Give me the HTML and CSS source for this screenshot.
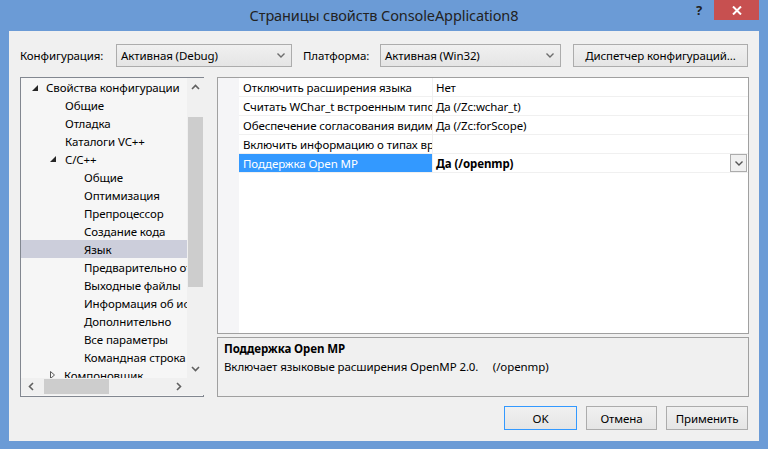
FILE: index.html
```html
<!DOCTYPE html>
<html lang="ru">
<head>
    <meta charset="UTF-8">
    <title>Страницы свойств ConsoleApplication8</title>
    <link rel="stylesheet" href="styles.css">
</head>
<body>

    <div class="titlebar">
        <span></span>
        <span class="title">Страницы свойств ConsoleApplication8</span>
        <div class="caption-buttons">
            <span class="help">?</span>
            <span class="close">
                <svg width="10" height="9" viewBox="0 0 10 9"><path d="M1 0.5 L9 8.5 M9 0.5 L1 8.5" stroke="#fff" stroke-width="2"/></svg>
            </span>
        </div>
    </div>

    <div class="dialog">
        <div class="config-row">
            <span class="label">Конфигурация:</span>
            <div class="combo combo-config">
                <span>Активная (Debug)</span>
                <svg class="chev" width="8" height="5" viewBox="0 0 8 5"><path d="M0.5 0.5 L4 4 L7.5 0.5" fill="none" stroke="#6d6d6d" stroke-width="1.4"/></svg>
            </div>
            <span class="label label-platform">Платформа:</span>
            <div class="combo combo-platform">
                <span>Активная (Win32)</span>
                <svg class="chev" width="8" height="5" viewBox="0 0 8 5"><path d="M0.5 0.5 L4 4 L7.5 0.5" fill="none" stroke="#6d6d6d" stroke-width="1.4"/></svg>
            </div>
            <button class="btn btn-manager">Диспетчер конфигураций...</button>
        </div>

        <div class="main">
            <div class="tree">
                <div class="tree-list">
                    <div class="node lvl0"><svg class="tri" width="6" height="6" viewBox="0 0 6 6"><polygon points="6,0 6,6 0,6" fill="#262626"/></svg>Свойства конфигурации</div>
                    <div class="node lvl1">Общие</div>
                    <div class="node lvl1">Отладка</div>
                    <div class="node lvl1">Каталоги VC++</div>
                    <div class="node lvl1 has-tri"><svg class="tri" width="6" height="6" viewBox="0 0 6 6"><polygon points="6,0 6,6 0,6" fill="#262626"/></svg>C/C++</div>
                    <div class="node lvl2">Общие</div>
                    <div class="node lvl2">Оптимизация</div>
                    <div class="node lvl2">Препроцессор</div>
                    <div class="node lvl2">Создание кода</div>
                    <div class="node lvl2 selected">Язык</div>
                    <div class="node lvl2">Предварительно откомпилированные заголовки</div>
                    <div class="node lvl2">Выходные файлы</div>
                    <div class="node lvl2">Информация об исходных файлах</div>
                    <div class="node lvl2">Дополнительно</div>
                    <div class="node lvl2">Все параметры</div>
                    <div class="node lvl2">Командная строка</div>
                    <div class="node lvl1 has-tri"><svg class="tri" width="5" height="8" viewBox="0 0 5 8"><polygon points="0.5,0.5 4.5,4 0.5,7.5" fill="none" stroke="#5a5a5a"/></svg>Компоновщик</div>
                </div>
                <div class="vscroll">
                    <svg class="arrow" width="9" height="6" viewBox="0 0 9 6"><path d="M1 5 L4.5 1.5 L8 5" fill="none" stroke="#606060" stroke-width="1.6"/></svg>
                    <div class="vtrack"><div class="vthumb"></div></div>
                    <svg class="arrow" width="9" height="6" viewBox="0 0 9 6"><path d="M1 1 L4.5 4.5 L8 1" fill="none" stroke="#606060" stroke-width="1.6"/></svg>
                </div>
                <div class="hscroll">
                    <svg class="arrow" width="6" height="9" viewBox="0 0 6 9"><path d="M5 1 L1.5 4.5 L5 8" fill="none" stroke="#606060" stroke-width="1.6"/></svg>
                    <div class="htrack"><div class="hthumb"></div></div>
                    <svg class="arrow" width="6" height="9" viewBox="0 0 6 9"><path d="M1 1 L4.5 4.5 L1 8" fill="none" stroke="#606060" stroke-width="1.6"/></svg>
                </div>
                <div class="corner"></div>
            </div>

            <div class="right">
                <div class="grid">
                    <div class="prop"><span class="margin"></span><span class="name">Отключить расширения языка</span><span class="value">Нет</span></div>
                    <div class="prop"><span class="margin"></span><span class="name">Считать WChar_t встроенным типом</span><span class="value">Да (/Zc:wchar_t)</span></div>
                    <div class="prop"><span class="margin"></span><span class="name">Обеспечение согласования видимости в цикле for</span><span class="value">Да (/Zc:forScope)</span></div>
                    <div class="prop"><span class="margin"></span><span class="name">Включить информацию о типах времени выполнения</span><span class="value"></span></div>
                    <div class="prop active">
                        <span class="margin"></span><span class="name">Поддержка Open MP</span>
                        <span class="value"><b>Да (/openmp)</b>
                            <span class="drop">
                                <svg width="8" height="5" viewBox="0 0 8 5"><path d="M0.5 0.5 L4 4 L7.5 0.5" fill="none" stroke="#555" stroke-width="1.4"/></svg>
                            </span>
                        </span>
                    </div>
                    <div class="grid-rest"><span class="margin"></span></div>
                </div>
                <div class="description">
                    <div class="desc-title">Поддержка Open MP</div>
                    <div class="desc-text">Включает языковые расширения OpenMP 2.0.&nbsp;&nbsp;&nbsp;&nbsp;&nbsp;(/openmp)</div>
                </div>
            </div>
        </div>

        <div class="actions">
            <button class="btn btn-ok">OK</button>
            <button class="btn btn-cancel">Отмена</button>
            <button class="btn btn-apply">Применить</button>
        </div>
    </div>

</body>
</html>
```

FILE: styles.css
```css
body {
    margin: 0;
    width: 768px;
    height: 449px;
    overflow: hidden;
    background: #6b9bd6;
    font-family: "Noto Sans", "Open Sans", sans-serif;
    font-size: 11.5px;
    letter-spacing: -0.1px;
    color: #000;
}

.titlebar {
    display: grid;
    grid-template-columns: 1fr auto 1fr;
    height: 31px;
    padding: 0 9px;
}

.title {
    font-size: 14.5px;
    color: #222;
    padding-top: 5px;
}

.caption-buttons {
    display: flex;
    justify-content: flex-end;
    align-items: flex-start;
}

.help {
    font-weight: bold;
    font-size: 13px;
    color: #222;
    margin: 1px 12px 0 0;
}

.close {
    display: flex;
    align-items: center;
    justify-content: center;
    width: 45px;
    height: 20px;
    background: #c75050;
}

.dialog {
    margin: 0 9px;
    height: 410px;
    box-sizing: border-box;
    background: #f0f0f0;
    padding: 13px 10px 0 11px;
}

.config-row {
    display: flex;
    align-items: center;
    height: 23px;
}

.label { width: 96px; }
.label-platform { width: 66px; margin-left: 11px; }

.combo {
    display: flex;
    align-items: center;
    justify-content: space-between;
    box-sizing: border-box;
    height: 23px;
    padding: 0 6px 0 4px;
    border: 1px solid #acacac;
    background: linear-gradient(#f0f0f0, #e5e5e5);
}

.combo-config { width: 176px; }
.combo-platform { width: 181px; margin-left: 11px; }

.btn {
    box-sizing: border-box;
    height: 24px;
    border: 1px solid #acacac;
    background: linear-gradient(#f0f0f0, #e5e5e5);
    font-family: inherit;
    font-size: inherit;
    letter-spacing: inherit;
    color: #000;
    padding: 0;
}

.btn-manager { width: 175px; height: 23px; margin-left: 12px; }

.main {
    display: flex;
    margin-top: 10px;
    height: 320px;
}

.tree {
    display: grid;
    grid-template-columns: 166px 17px;
    grid-template-rows: 300px 17px;
    width: 184px;
    box-sizing: border-box;
    border: 1px solid #828790;
    background: #f6f6f6;
}

.tree-list {
    overflow: hidden;
}

.node {
    display: flex;
    align-items: center;
    height: 18px;
    white-space: nowrap;
}

.lvl0 { padding-left: 11px; }
.lvl0 .tri { margin-right: 8px; margin-top: 1px; }
.lvl1 { padding-left: 44px; }
.lvl1.has-tri { padding-left: 29px; }
.lvl1 .tri { margin-right: 9px; }
.lvl2 { padding-left: 63px; }

.node.selected { background: #cccedb; }

.vscroll {
    display: flex;
    flex-direction: column;
    align-items: center;
    background: #f0f0f0;
}

.vscroll .arrow { margin: 6px 0; }

.vtrack {
    flex: 1;
    width: 100%;
    padding-top: 21px;
}

.vthumb {
    width: 15px;
    margin-left: 1px;
    height: 170px;
    background: #cdcdcd;
}

.hscroll {
    display: flex;
    align-items: center;
    background: #f0f0f0;
    padding: 0 5px 0 7px;
}

.htrack {
    flex: 1;
    height: 15px;
    padding-left: 10px;
}

.hthumb {
    width: 65px;
    height: 15px;
    background: #cdcdcd;
}

.corner { background: #f0f0f0; }

.right {
    display: flex;
    flex-direction: column;
    width: 532px;
    margin-left: 13px;
}

.grid {
    height: 257px;
    box-sizing: border-box;
    border: 1px solid #a0a0a0;
    background: #fff;
    display: flex;
    flex-direction: column;
}

.prop {
    display: flex;
    height: 19px;
    flex-shrink: 0;
}

.margin {
    width: 21px;
    flex-shrink: 0;
    background: #f5f5f7;
}

.name, .value {
    display: flex;
    align-items: center;
    box-sizing: border-box;
    border-bottom: 1px solid #f0f0f0;
    white-space: nowrap;
    overflow: hidden;
}

.name {
    width: 194px;
    padding-left: 4px;
    border-right: 1px solid #f0f0f0;
}

.value {
    flex: 1;
    padding-left: 3px;
    justify-content: space-between;
}

.prop.active .name {
    background: #3399ff;
    color: #fff;
}

.drop {
    display: flex;
    align-items: center;
    justify-content: center;
    box-sizing: border-box;
    width: 17px;
    height: 18px;
    border: 1px solid #acacac;
    background: #f0f0f0;
    margin-right: 1px;
}

.grid-rest {
    flex: 1;
    display: flex;
}

.description {
    margin-top: 3px;
    height: 60px;
    box-sizing: border-box;
    border: 1px solid #a0a0a0;
    background: #f0f0f0;
    padding: 3px 6px;
}

.desc-title { font-weight: bold; height: 18px; }
.desc-text { height: 18px; }

.actions {
    display: flex;
    justify-content: flex-end;
    margin-top: 9px;
    padding-right: 1px;
}

.btn-ok { width: 73px; border-color: #3399ff; }
.btn-cancel { width: 71px; margin-left: 9px; }
.btn-apply { width: 82px; margin-left: 9px; }
```
